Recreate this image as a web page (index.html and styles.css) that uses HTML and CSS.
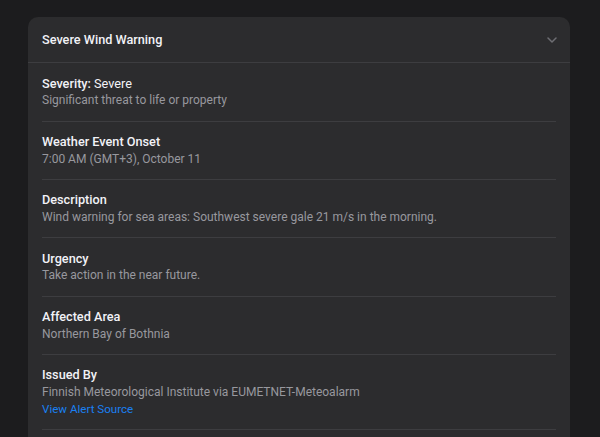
FILE: index.html
```html
<!DOCTYPE html>
<html>
<head>
<meta charset="utf-8">
<link rel="stylesheet" href="styles.css">
</head>
<body>
<div class="card">
  <div class="header">
    <span class="header-title">Severe Wind Warning</span>
    <svg class="chevron" width="10" height="6" viewBox="0 0 10 6"><path d="M1 1 L5 5 L9 1" fill="none" stroke="#6e6e73" stroke-width="1.5" stroke-linecap="round" stroke-linejoin="round"/></svg>
  </div>
  <div class="rows">
    <div class="row">
      <div class="label"><b>Severity:</b> Severe</div>
      <div class="value">Significant threat to life or property</div>
    </div>
    <div class="row">
      <div class="label"><b>Weather Event Onset</b></div>
      <div class="value">7:00 AM (GMT+3), October 11</div>
    </div>
    <div class="row">
      <div class="label"><b>Description</b></div>
      <div class="value">Wind warning for sea areas: Southwest severe gale 21 m/s in the morning.</div>
    </div>
    <div class="row">
      <div class="label"><b>Urgency</b></div>
      <div class="value">Take action in the near future.</div>
    </div>
    <div class="row">
      <div class="label"><b>Affected Area</b></div>
      <div class="value">Northern Bay of Bothnia</div>
    </div>
    <div class="row">
      <div class="label"><b>Issued By</b></div>
      <div class="value">Finnish Meteorological Institute via EUMETNET-Meteoalarm</div>
      <a class="link" href="#">View Alert Source</a>
    </div>
    <div class="row"></div>
  </div>
</div>
</body>
</html>
```
FILE: styles.css
```css
html, body {
  margin: 0;
  padding: 0;
  background: #1c1c1e;
  height: 100%;
  overflow: hidden;
}
body {
  font-family: Roboto, "Liberation Sans", sans-serif;
  font-size: 12px;
  line-height: 16.6px;
  color: #f2f2f7;
  padding: 17px 30px 0 28px;
}
.card {
  background: #2c2c2e;
  border-radius: 10px 10px 0 0;
  min-height: 500px;
}
.header {
  height: 45px;
  border-bottom: 1px solid #3d3d40;
  display: flex;
  align-items: center;
  justify-content: space-between;
  padding: 0 14px;
}
.header-title {
  font-weight: 500;
  font-size: 12.7px;
  padding-top: 1px;
}
.chevron {
  margin-right: -1px;
}
.rows {
  padding: 0.2px 14px 0;
}
.row {
  padding: 12.4px 0 11.8px;
  border-bottom: 1px solid #3d3d40;
  display: flex;
  flex-direction: column;
}
.row:last-child {
  border-bottom: none;
}
.label {
  color: #f2f2f7;
  font-size: 12.7px;
}
.label b {
  font-weight: 500;
}
.value {
  color: #98989e;
}
.link {
  color: #1a80f2;
  text-decoration: none;
  font-size: 11.6px;
}
```
